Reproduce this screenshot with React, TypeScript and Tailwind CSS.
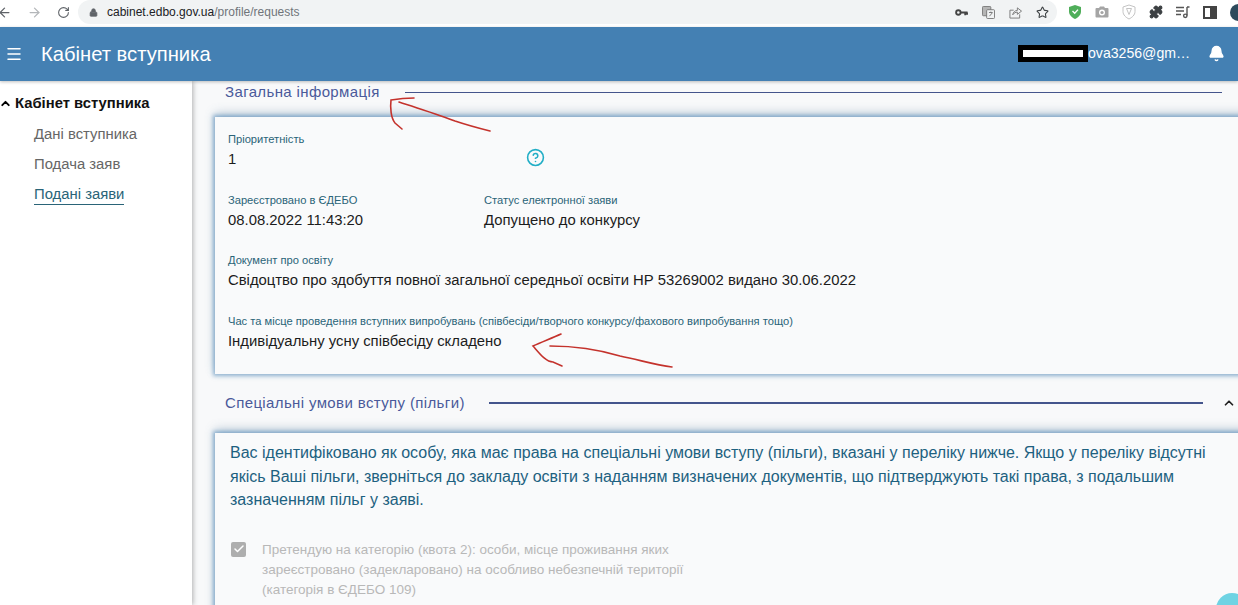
import { ArrowLeft, ArrowRight, Bell, Check, ChevronUp, CircleHelp, Lock, Menu, Puzzle, RotateCw, Star } from 'lucide-react';

const SHIELD = 'M7 1 L13 3 V7.5 C13 11 10 13.5 7 15 C4 13.5 1 11 1 7.5 V3 Z';

const Field = ({ label, value, className = '' }: { label: string; value: string; className?: string }) => (
  <div className={className}>
    <p className="text-[11.15px] leading-[14px] text-[#2a6478]">{label}</p>
    <p className="mt-[3px] text-[14.85px] leading-[20px] text-[#1c1c1c]">{value}</p>
  </div>
);

function BrowserBar() {
  return (
    <div className="flex h-[27px] items-start bg-white">
      <div className="flex h-[24px] w-[78px] shrink-0 items-center text-[#5f6368]">
        <ArrowLeft className="ml-[-3px] h-[15px] w-[15px]" />
        <ArrowRight className="ml-[15px] h-[15px] w-[15px] text-[#b4b7ba]" />
        <RotateCw className="ml-[15px] h-[13px] w-[13px]" />
      </div>
      <div className="flex h-[24px] w-[979px] shrink-0 items-center justify-between rounded-full bg-[#f1f3f4] pr-[8px]">
        <div className="flex items-center text-[12px]">
          <Lock className="ml-[11px] h-[9px] w-[9px] fill-[#5f6368] text-[#5f6368]" />
          <span className="ml-[9px] text-[#202124]">cabinet.edbo.gov.ua</span>
          <span className="text-[#70757a]">/profile/requests</span>
        </div>
        <div className="flex items-center gap-[14px] text-[#5f6368]">
          <svg width="13" height="13" viewBox="0 0 14 14" fill="none" stroke="#444" strokeWidth="2">
            <circle cx="3.6" cy="7" r="2.4" />
            <path d="M6 7 H13.5 M11 7 V10 M13 7 V9.5" />
          </svg>
          <svg width="13" height="13" viewBox="0 0 14 14" fill="none" stroke="#777" strokeWidth="1">
            <rect x="0.5" y="0.5" width="9" height="10" rx="1" fill="#b5b5b5" />
            <rect x="5" y="4" width="8.5" height="9.5" rx="1" fill="#f1f3f4" />
            <path d="M7.5 7 H11.5 M9.5 6 V7 M8 11 L11 7.5" />
          </svg>
          <svg width="13" height="13" viewBox="0 0 14 14" fill="none" stroke="#777" strokeWidth="1">
            <path d="M11.5 9 V13 H1 V4.5 H5" />
            <path d="M4 9.5 C4.5 6.5 6.5 4.8 9 4.8 V2 L13.5 5.5 L9 9 V6.6 C7 6.6 5.5 7.5 4 9.5 Z" />
          </svg>
          <Star className="h-[13px] w-[13px] text-[#3c4043]" />
        </div>
      </div>
      <div className="ml-[11px] flex h-[24px] shrink-0 items-center gap-[13px] text-[#5f6368]">
        <svg width="14" height="16" viewBox="0 0 14 16">
          <path d={SHIELD} fill="#4fae5a" />
          <path d="M4.5 7 L6.7 9.2 L10 5.6" fill="none" stroke="#fff" strokeWidth="1.4" />
        </svg>
        <svg width="14" height="14" viewBox="0 0 14 14">
          <path d="M1.5 3 H4 L5 1.5 H9 L10 3 H12.5 A1 1 0 0 1 13.5 4 V11.5 A1 1 0 0 1 12.5 12.5 H1.5 A1 1 0 0 1 0.5 11.5 V4 A1 1 0 0 1 1.5 3 Z" fill="#a5a5a5" />
          <circle cx="7" cy="7.5" r="3" fill="#fff" />
          <circle cx="7" cy="7.5" r="1.6" fill="#a5a5a5" />
        </svg>
        <svg width="14" height="16" viewBox="0 0 14 16" fill="none" stroke="#c4c4c4">
          <path d={SHIELD} />
          <path d="M4.5 4.5 H9.5 L7 10.5 Z" />
        </svg>
        <Puzzle className="h-[14px] w-[14px] fill-[#3c4043] text-[#3c4043]" />
        <svg width="14" height="14" viewBox="0 0 14 14" fill="none" stroke="#555" strokeWidth="1.4">
          <path d="M0 2.5 H8 M0 6 H8 M0 9.5 H5 M11 2 H13.5 M11 2 V10.5" />
          <circle cx="9.3" cy="10.8" r="1.7" />
        </svg>
        <div className="flex h-[13px] w-[14px] border-2 border-[#444]">
          <div className="flex-1 bg-white" />
          <div className="w-[5px] bg-[#444]" />
        </div>
        <div className="h-[17px] w-[17px] shrink-0 rounded-full bg-[#2c4a5c]" />
      </div>
    </div>
  );
}

function Header() {
  return (
    <header className="relative z-20 flex h-[54px] items-center bg-[#4480b3] text-white shadow-[0_1px_3px_rgba(0,0,0,0.25)]">
      <Menu className="ml-[5px] h-[18px] w-[18px]" />
      <h1 className="ml-[18px] text-[20.2px] leading-none">Кабінет вступника</h1>
      <div className="ml-auto flex items-center text-[14.1px]">
        <div className="flex h-[17px] w-[70px] items-center justify-center bg-black">
          <div className="h-[7px] w-[60px] bg-white" />
        </div>
        <span className="w-[103px] whitespace-nowrap">ova3256@gm…</span>
        <Bell className="ml-[17px] mr-[13px] h-[17px] w-[17px] fill-white" />
      </div>
    </header>
  );
}

function Sidebar() {
  return (
    <aside className="relative z-10 h-full w-[192px] shrink-0 bg-white shadow-[1px_0_5px_rgba(0,0,0,0.3)]">
      <div className="flex items-center pt-[12px]">
        <ChevronUp className="ml-[-1px] h-[13px] w-[13px] text-black" strokeWidth={3.5} />
        <span className="ml-[3px] text-[14.8px] font-bold leading-[20px] text-[#111]">Кабінет вступника</span>
      </div>
      <nav className="ml-[34px] mt-[11px] flex flex-col items-start gap-[10px] text-[14.85px] leading-[20px] text-[#666]">
        <a>Дані вступника</a>
        <a>Подача заяв</a>
        <a className="border-b border-[#2a6478] text-[#2a6478]">Подані заяви</a>
      </nav>
    </aside>
  );
}

function Main() {
  return (
    <main className="min-w-0 flex-1 overflow-hidden bg-[#f8f9fa] pl-[23px]">
      <div className="flex h-[23px] items-center pl-[10px]">
        <h2 className="text-[15px] tracking-[0.37px] text-[#4a5a9a]">Загальна інформація</h2>
        <div className="ml-[25px] mr-[16px] h-[1.5px] flex-1 bg-[#44558c]" />
      </div>

      <section className="mt-[13px] h-[257px] w-[1040px] bg-[#f9fafb] pl-[13px] pt-[15px] shadow-[0_0_4px_2px_rgba(70,130,180,0.55),0_-4px_10px_rgba(70,110,150,0.3)]">
        <div className="relative w-[320px]">
          <Field label="Пріоритетність" value="1" />
          <CircleHelp className="absolute left-[298px] top-[16px] h-[19px] w-[19px] text-[#22aec6]" />
        </div>
        <div className="mt-[24px] flex">
          <Field label="Зареєстровано в ЄДЕБО" value="08.08.2022 11:43:20" className="w-[256px]" />
          <Field label="Статус електронної заяви" value="Допущено до конкурсу" />
        </div>
        <Field className="mt-[23px]" label="Документ про освіту" value="Свідоцтво про здобуття повної загальної середньої освіти НР 53269002 видано 30.06.2022" />
        <Field className="mt-[24px]" label="Час та місце проведення вступних випробувань (співбесіди/творчого конкурсу/фахового випробування тощо)" value="Індивідуальну усну співбесіду складено" />
      </section>

      <div className="mt-[18px] flex h-[22px] items-center pl-[10px]">
        <h2 className="text-[15px] tracking-[0.37px] text-[#4a5a9a]">Спеціальні умови вступу (пільги)</h2>
        <div className="ml-[24px] h-[1.5px] flex-1 bg-[#44558c]" />
        <ChevronUp className="ml-[19px] mr-[2px] h-[14px] w-[14px] text-[#222]" strokeWidth={3} />
      </div>

      <section className="mt-[19px] h-[200px] w-[1040px] bg-[#f9fafb] pl-[15px] pr-[16px] pt-[8px] shadow-[0_0_4px_2px_rgba(70,130,180,0.55),0_-4px_10px_rgba(70,110,150,0.3)]">
        <p className="text-[16px] leading-[23.5px] text-[#1d6180]">
          Вас ідентифіковано як особу, яка має права на спеціальні умови вступу (пільги), вказані у переліку нижче. Якщо у переліку відсутні
          якісь Ваші пільги, зверніться до закладу освіти з наданням визначених документів, що підтверджують такі права, з подальшим
          зазначенням пільг у заяві.
        </p>
        <div className="mt-[28px] flex">
          <div className="ml-[1px] mt-[2px] flex h-[15px] w-[15px] items-center justify-center rounded-[2px] bg-[#aeaeae]">
            <Check className="h-[12px] w-[12px] text-white" strokeWidth={3} />
          </div>
          <p className="ml-[16px] w-[430px] text-[13.5px] leading-[20px] text-[#b8b8b8]">
            Претендую на категорію (квота 2): особи, місце проживання яких зареєстровано (задекларовано) на особливо небезпечній території (категорія в ЄДЕБО 109)
          </p>
        </div>
      </section>
    </main>
  );
}

export default function App() {
  return (
    <div className="relative h-[605px] w-[1238px] overflow-hidden bg-white font-['Liberation_Sans',Arial,sans-serif]">
      <BrowserBar />
      <Header />
      <div className="flex h-[524px]">
        <Sidebar />
        <Main />
      </div>

      {/* red marker arrows drawn on top of the screenshot */}
      <svg className="absolute left-0 top-0 z-30" width="1238" height="605" fill="none" stroke="#c4322c" strokeWidth="1.6" strokeLinecap="round">
        <path d="M414 98 C405 98 397 99 391 100 C390 108 391 118 395 123 L402 129" />
        <path d="M399 102 C420 109 440 115 455 121 C470 126 482 129 490 131" />
        <path d="M561 334 C552 338 542 342 533 346 C540 354 546 362 553 362 L562 366" />
        <path d="M550 346 C575 346 600 350 620 356 C640 360 655 365 672 367" />
      </svg>

      <div className="absolute bottom-[-20px] right-[-10px] h-[32px] w-[32px] rounded-full bg-[#6fd3e3]" />
    </div>
  );
}
